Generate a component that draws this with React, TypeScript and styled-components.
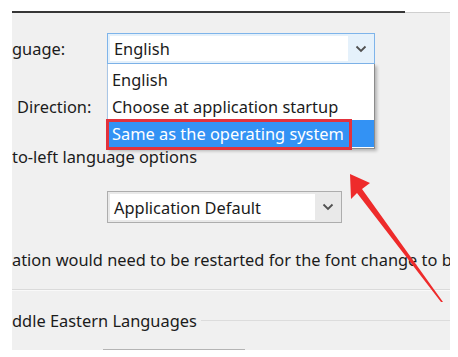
import React from 'react';
import styled, { createGlobalStyle } from 'styled-components';

const GlobalStyle = createGlobalStyle`
  html, body {
    margin: 0;
    padding: 0;
    background: #ffffff;
  }
  body {
    font-family: 'Noto Sans', 'Open Sans', sans-serif;
    color: #1b1b1b;
  }
`;

const Screen = styled.div`
  position: relative;
  width: 458px;
  height: 357px;
  box-sizing: border-box;
  padding: 11px 8px 7px 12px;
  display: flex;
  flex-direction: column;
  overflow: hidden;
  background: #ffffff;
`;

const TopRule = styled.div`
  display: flex;
  align-items: flex-end;
  height: 2px;
  flex-shrink: 0;
`;
const RulePart = styled.div<{ $dark?: boolean }>`
  flex: ${({ $dark }) => ($dark ? '0 0 393px' : '1 1 auto')};
  height: ${({ $dark }) => ($dark ? '2px' : '1px')};
  background: ${({ $dark }) => ($dark ? '#363636' : '#cfcfcf')};
`;

const Panel = styled.div`
  flex: 1 1 auto;
  min-height: 0;
  background: #f0f0f0;
  overflow: hidden;
  display: flex;
  flex-direction: column;
  font-size: 16.4px;
  white-space: nowrap;

  & > * {
    flex-shrink: 0;
  }
`;

const FieldRow = styled.div<{ $top: number; $height: number }>`
  display: grid;
  grid-template-columns: 95px auto;
  align-items: center;
  margin-top: ${({ $top }) => $top}px;
  height: ${({ $height }) => $height}px;
`;

const Label = styled.span<{ $indent?: number }>`
  padding-left: ${({ $indent }) => $indent || 0}px;
  line-height: 20px;
`;

const TextLine = styled.div<{ $top: number }>`
  margin-top: ${({ $top }) => $top}px;
  height: 20px;
  line-height: 20px;
`;

const ComboWrap = styled.div`
  position: relative;
  justify-self: start;
`;

const Combo = styled.div<{ $width: number; $focused?: boolean }>`
  box-sizing: border-box;
  width: ${({ $width }) => $width}px;
  height: ${({ $focused }) => ($focused ? 31 : 32)}px;
  border: 1px solid ${({ $focused }) => ($focused ? '#7eb4ea' : '#adadad')};
  background: ${({ $focused }) => ($focused ? '#e5f1fb' : '#e9e9e9')};
  display: flex;
  align-items: stretch;
  padding: 2px 0 2px 2px;
`;

const ComboValue = styled.div`
  flex: 1 1 auto;
  background: #ffffff;
  display: flex;
  align-items: center;
  padding-left: 4px;
`;

const ComboButton = styled.div`
  flex: 0 0 26px;
  display: flex;
  align-items: center;
  justify-content: center;
  color: #505050;
`;

const DropList = styled.div`
  position: absolute;
  top: 100%;
  left: 0;
  width: 268px;
  box-sizing: border-box;
  background: #ffffff;
  border: 1px solid #8c8c8c;
  border-left-color: #a9c6e6;
  border-top: none;
  padding: 2px 0 1px;
  box-shadow: 2px 2px 3px rgba(0, 0, 0, 0.25);
  z-index: 2;
`;

const DropItem = styled.div<{ $selected?: boolean }>`
  position: relative;
  height: 27px;
  line-height: 27px;
  padding-left: 4px;
  background: ${({ $selected }) => ($selected ? '#3392f4' : 'transparent')};
  color: ${({ $selected }) => ($selected ? '#ffffff' : '#1b1b1b')};
`;

const Callout = styled.div`
  position: absolute;
  left: -2px;
  top: -1px;
  width: 246px;
  height: 31px;
  box-sizing: border-box;
  border: 3px solid #e2323c;
`;

const Separator = styled.div<{ $top: number }>`
  margin-top: ${({ $top }) => $top}px;
  height: 1px;
  background: #dadada;
  border-bottom: 1px solid #f9f9f9;
`;

const GroupHeader = styled.div<{ $top: number }>`
  margin-top: ${({ $top }) => $top}px;
  display: flex;
  align-items: center;
  gap: 4px;
  height: 20px;
`;
const GroupLine = styled.div`
  flex: 1 1 auto;
  height: 1px;
  margin-top: 1px;
  background: #dcdcdc;
`;

const StubCombo = styled.div`
  margin: 19px 0 0 91px;
  width: 142px;
  height: 24px;
  box-sizing: border-box;
  border: 1px solid #b4b4b4;
  background: #e9e9e9;
`;

const Arrow = styled.svg`
  position: absolute;
  left: 0;
  top: 0;
  pointer-events: none;
  z-index: 3;
`;

const Chevron = () => (
  <svg width="12" height="8" viewBox="0 0 12 8">
    <path d="M1.5 1.5 L6 6 L10.5 1.5" fill="none" stroke="currentColor" strokeWidth="1.8" />
  </svg>
);

export default function App() {
  return (
    <>
      <GlobalStyle />
      <Screen>
        <TopRule>
          <RulePart $dark />
          <RulePart />
        </TopRule>
        <Panel>
          <FieldRow $top={20} $height={31}>
            <Label>guage:</Label>
            <ComboWrap>
              <Combo $width={268} $focused>
                <ComboValue>English</ComboValue>
                <ComboButton>
                  <Chevron />
                </ComboButton>
              </Combo>
              <DropList>
                <DropItem>English</DropItem>
                <DropItem>Choose at application startup</DropItem>
                <DropItem $selected>
                  Same as the operating system
                  <Callout />
                </DropItem>
              </DropList>
            </ComboWrap>
          </FieldRow>
          <FieldRow $top={27} $height={31}>
            <Label $indent={5}>Direction:</Label>
          </FieldRow>
          <TextLine $top={25}>to-left language options</TextLine>
          <FieldRow $top={24} $height={32}>
            <span />
            <Combo $width={235}>
              <ComboValue>Application Default</ComboValue>
              <ComboButton>
                <Chevron />
              </ComboButton>
            </Combo>
          </FieldRow>
          <TextLine $top={27}>ation would need to be restarted for the font change to be applied.</TextLine>
          <Separator $top={19} />
          <GroupHeader $top={19}>
            <span>ddle Eastern Languages</span>
            <GroupLine />
          </GroupHeader>
          <StubCombo />
        </Panel>
        <Arrow width="458" height="357" viewBox="0 0 458 357">
          <polygon
            points="350,174 370,183 362,189 443,302 441,302 357,193 351,199"
            fill="#ee2b2b"
          />
        </Arrow>
      </Screen>
    </>
  );
}
